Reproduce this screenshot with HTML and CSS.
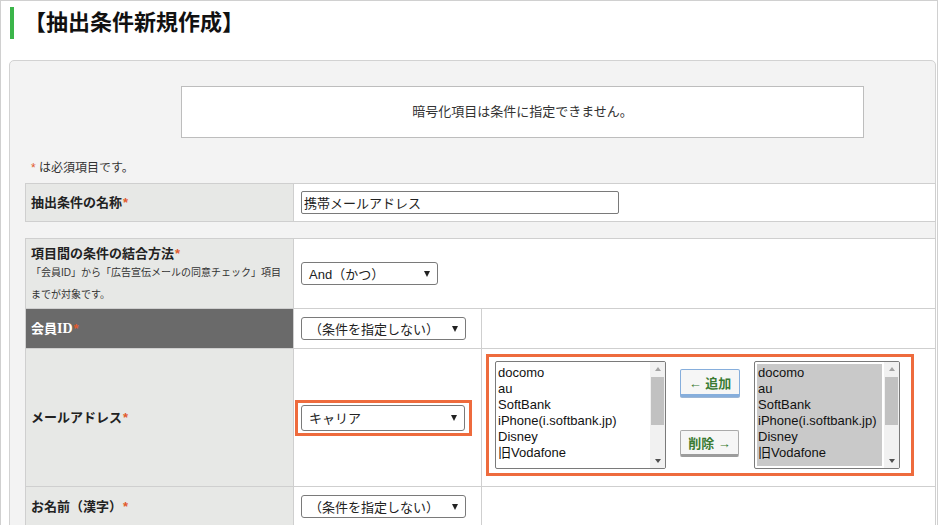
FILE: index.html
```html
<!DOCTYPE html>
<html lang="ja">
<head>
    <meta charset="UTF-8">
    <meta name="viewport" content="width=device-width, initial-scale=1.0">
    <title>抽出条件新規作成</title>
    <link rel="stylesheet" href="styles.css">
</head>
<body>
    <div class="page">
        <h1 class="page-title">【抽出条件新規作成】</h1>

        <div class="panel">
            <div class="notice">暗号化項目は条件に指定できません。</div>
            <p class="req-note"><span class="req">*</span> は必須項目です。</p>

            <table class="form-table name-table">
                <tr>
                    <th>抽出条件の名称<span class="req">*</span></th>
                    <td><input type="text" class="text-input" value="携帯メールアドレス"></td>
                </tr>
            </table>

            <table class="form-table cond-table">
                <colgroup>
                    <col class="col-label">
                    <col class="col-op">
                    <col>
                </colgroup>
                <tr class="row-join">
                    <th>
                        項目間の条件の結合方法<span class="req">*</span>
                        <p class="sub-note">「会員ID」から「広告宣伝メールの同意チェック」項目<br>までが対象です。</p>
                    </th>
                    <td colspan="2">
                        <div class="select select-and"><span>And（かつ）</span><i class="arrow"></i></div>
                    </td>
                </tr>
                <tr class="row-short">
                    <th class="dark">会員<span class="id-text">ID</span><span class="req">*</span></th>
                    <td>
                        <div class="select"><span>（条件を指定しない）</span><i class="arrow"></i></div>
                    </td>
                    <td></td>
                </tr>
                <tr class="row-mail">
                    <th>メールアドレス<span class="req">*</span></th>
                    <td class="hl-cell">
                        <div class="highlight">
                            <div class="select select-carrier"><span>キャリア</span><i class="arrow"></i></div>
                        </div>
                    </td>
                    <td class="carrier-cell">
                        <div class="highlight carrier-box">
                            <div class="listbox list-left">
                                <ul class="options">
                                    <li>docomo</li>
                                    <li>au</li>
                                    <li>SoftBank</li>
                                    <li>iPhone(i.softbank.jp)</li>
                                    <li>Disney</li>
                                    <li>旧Vodafone</li>
                                </ul>
                                <div class="scrollbar">
                                    <i class="sb-up"></i>
                                    <div class="sb-track"><div class="sb-thumb"></div></div>
                                    <i class="sb-down"></i>
                                </div>
                            </div>
                            <div class="move-buttons">
                                <button class="btn btn-add">← 追加</button>
                                <button class="btn btn-del">削除 →</button>
                            </div>
                            <div class="listbox list-right">
                                <ul class="options selected">
                                    <li>docomo</li>
                                    <li>au</li>
                                    <li>SoftBank</li>
                                    <li>iPhone(i.softbank.jp)</li>
                                    <li>Disney</li>
                                    <li>旧Vodafone</li>
                                </ul>
                                <div class="scrollbar">
                                    <i class="sb-up"></i>
                                    <div class="sb-track"><div class="sb-thumb"></div></div>
                                    <i class="sb-down"></i>
                                </div>
                            </div>
                        </div>
                    </td>
                </tr>
                <tr class="row-short">
                    <th>お名前（漢字）<span class="req">*</span></th>
                    <td>
                        <div class="select"><span>（条件を指定しない）</span><i class="arrow"></i></div>
                    </td>
                    <td></td>
                </tr>
            </table>
        </div>
    </div>
</body>
</html>
```

FILE: styles.css
```css
* {
    box-sizing: border-box;
    margin: 0;
    padding: 0;
}

body {
    font-family: "Liberation Sans", "Noto Sans CJK JP", sans-serif;
    font-size: 13px;
    color: #222;
    background-color: #fff;
}

.page {
    width: 938px;
    height: 525px;
    border: 1px solid #d0d0d0;
    border-bottom: none;
    overflow: hidden;
}

.page-title {
    margin: 6px 0 0 9px;
    height: 32px;
    border-left: 4px solid #3bb54a;
    padding-left: 10px;
    font-size: 22px;
    line-height: 31px;
    font-weight: bold;
    color: #111;
}

.panel {
    margin: 21px 0 0 8px;
    width: 927px;
    height: 480px;
    padding: 25px 0 0 15px;
    background-color: #f3f3f3;
    border: 1px solid #d2d2d2;
    border-radius: 5px;
}

.notice {
    margin-left: 156px;
    width: 683px;
    height: 52px;
    border: 1px solid #bdbdbd;
    background-color: #fff;
    text-align: center;
    line-height: 50px;
    color: #333;
}

.req-note {
    margin: 22px 0 7px 5px;
    font-size: 12px;
    line-height: 16px;
    color: #333;
}

.req {
    color: #e25a2c;
    margin-left: 1px;
}

/* tables */

.form-table {
    width: 911px;
    border-collapse: collapse;
    background-color: #fff;
}

.form-table th,
.form-table td {
    border: 1px solid #cfcfcf;
    vertical-align: middle;
}

.form-table th {
    width: 268px;
    padding: 0 5px;
    background-color: #e7e8e6;
    text-align: left;
    font-weight: bold;
    color: #222;
    line-height: 16px;
}

.form-table td {
    padding: 0 7px;
}

.name-table tr {
    height: 38px;
}

.cond-table {
    margin-top: 16px;
}

.col-label {
    width: 268px;
}

.col-op {
    width: 188px;
}

.row-join th {
    vertical-align: top;
    padding-top: 7px;
    height: 70px;
}

.sub-note {
    font-size: 10px;
    font-weight: normal;
    line-height: 22px;
    color: #333;
}

.row-short {
    height: 40px;
}

.row-mail {
    height: 138px;
}

.form-table th.dark {
    background-color: #6a6a6a;
    color: #fff;
}

.id-text {
    font-family: "Liberation Serif", serif;
    font-size: 14px;
}

.text-input {
    display: block;
    width: 318px;
    height: 23px;
    border: 1px solid #7a7a7a;
    border-radius: 2px;
    padding: 0 2px;
    font-family: inherit;
    font-size: 13px;
    color: #222;
}

.select {
    display: flex;
    align-items: center;
    justify-content: space-between;
    width: 165px;
    height: 23px;
    padding: 0 7px 0 7px;
    border: 1px solid #7a7a7a;
    border-radius: 3px;
    background-color: #fff;
    font-size: 13px;
    color: #222;
}

.select-and {
    width: 137px;
}

.select-carrier {
    width: 164px;
    height: 26px;
}

.arrow {
    width: 0;
    height: 0;
    border-left: 3px solid transparent;
    border-right: 3px solid transparent;
    border-top: 6px solid #222;
}

/* highlighted parts */

.highlight {
    border: 3px solid #ee6b3d;
}

.form-table td.hl-cell {
    padding: 0 1px;
}

.hl-cell .highlight {
    width: 177px;
    padding: 2px 4px 2px 3px;
}

.form-table td.carrier-cell {
    vertical-align: top;
    padding: 5px 0 0 4px;
}

.carrier-box {
    display: flex;
    align-items: flex-start;
    width: 428px;
    height: 122px;
    padding: 4px 0 0 6px;
}

.listbox {
    display: flex;
    height: 108px;
    border: 1px solid #7a7a7a;
    border-radius: 2px;
    background-color: #fff;
    overflow: hidden;
}

.list-left {
    width: 171px;
}

.list-right {
    width: 146px;
}

.options {
    flex: 1;
    list-style: none;
    padding: 3px 0 0 2px;
    font-size: 13px;
    line-height: 16px;
    color: #111;
    white-space: nowrap;
    overflow: hidden;
}

.options.selected {
    margin: 2px 2px 2px 2px;
    padding: 1px 0 0 1px;
    background-color: #c9c9c9;
}

.scrollbar {
    display: flex;
    flex-direction: column;
    align-items: center;
    width: 15px;
    background-color: #f1f1f1;
}

.sb-up,
.sb-down {
    display: block;
    width: 0;
    height: 0;
    margin: 5px 0;
    border-left: 3px solid transparent;
    border-right: 3px solid transparent;
}

.sb-up {
    border-bottom: 4px solid #a3a3a3;
}

.sb-down {
    border-top: 4px solid #505050;
}

.sb-track {
    flex: 1;
    width: 100%;
    padding: 1px 1px 0;
}

.sb-thumb {
    height: 48px;
    background-color: #c1c1c1;
}

.move-buttons {
    display: flex;
    flex-direction: column;
    width: 60px;
    margin: 8px 14px 0 14px;
}

.btn {
    height: 28px;
    padding: 0;
    border: 1px solid #aaa;
    border-bottom: 3px solid #9c9c9c;
    border-radius: 2px;
    background-color: #f6f6f6;
    font-family: inherit;
    font-size: 13px;
    font-weight: bold;
    color: #3a7b34;
    cursor: pointer;
}

.btn-add {
    border-color: #86aedc;
    border-bottom-color: #86aedc;
    box-shadow: 0 1px 0 #9db6d4;
}

.btn-del {
    width: 59px;
    height: 27px;
    margin-top: 33px;
}
```
